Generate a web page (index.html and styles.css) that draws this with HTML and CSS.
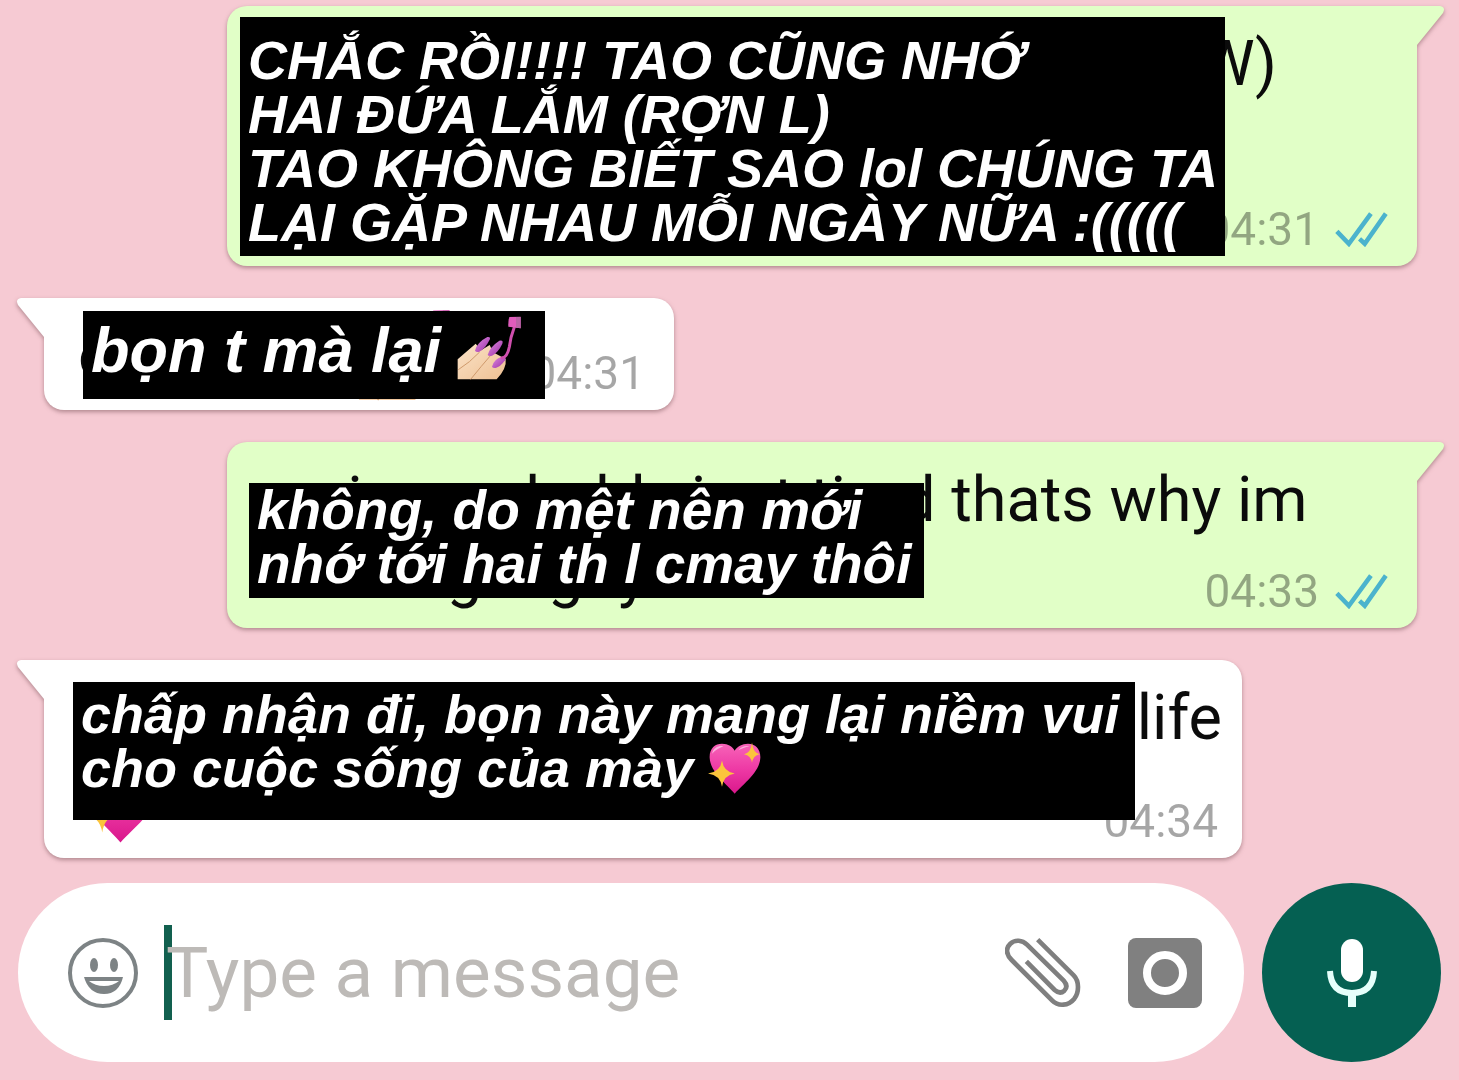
FILE: index.html
```html
<!DOCTYPE html>
<html lang="vi">
<head>
    <meta charset="UTF-8">
    <meta name="viewport" content="width=device-width, initial-scale=1.0">
    <title>Chat</title>
    <link rel="stylesheet" href="styles.css">
</head>
<body>
    <!-- shared icons -->
    <svg class="defs" aria-hidden="true">
        <defs>
            <linearGradient id="pink" x1="0" y1="0" x2="0" y2="1">
                <stop offset="0" stop-color="#f763b8"/>
                <stop offset="0.5" stop-color="#ee3aa5"/>
                <stop offset="1" stop-color="#d9178b"/>
            </linearGradient>
            <linearGradient id="skin" x1="0" y1="0" x2="1" y2="1">
                <stop offset="0" stop-color="#fbe3c8"/>
                <stop offset="1" stop-color="#eec093"/>
            </linearGradient>
            <linearGradient id="polish" x1="0" y1="0" x2="1" y2="1">
                <stop offset="0" stop-color="#dd8be0"/>
                <stop offset="1" stop-color="#9c2fa6"/>
            </linearGradient>
        </defs>
        <symbol id="heart" viewBox="54 33 162 158">
            <path d="M134 188C110 158 61 124 59 80C58 52 75 38 96 38C115 38 128 47 134 59C141 47 156 38 174 38C196 38 212 54 211 80C209 124 160 158 134 188Z" fill="url(#pink)"/>
            <path d="M66 68C70 50 84 43 100 45C90 49 77 55 66 68Z" fill="#fbb0dc"/>
            <path d="M145 57C154 46 165 43 178 45C165 48 156 52 145 57Z" fill="#fbb0dc"/>
            <path d="M96 88Q101 122 134 127Q101 132 96 167Q91 132 54 127Q91 122 96 88Z" fill="#fbc43c"/>
            <path d="M186 34Q189 65 209 69Q189 73 186 95Q183 73 162 69Q183 65 186 34Z" fill="#fbc43c"/>
        </symbol>
        <symbol id="nails" viewBox="36 31 192 192">
            <path d="M38 161L92 114L108 134L134 118L144 140L182 160Q186 188 155 221H38Z" fill="url(#skin)"/>
            <path d="M40 192Q75 170 104 139M77 221Q110 180 138 148" fill="none" stroke="#cf9a6c" stroke-width="3"/>
            <path d="M90 135Q96 110 127 94Q138 92 134 102Q120 130 103 138Q94 141 90 135Z" fill="url(#polish)"/>
            <path d="M128 148Q134 124 163 105Q176 102 172 114Q160 140 141 150Q132 153 128 148Z" fill="url(#polish)"/>
            <path d="M141 183Q146 160 171 153Q186 153 180 164Q166 184 152 187Q143 188 141 183Z" fill="url(#polish)"/>
            <path d="M171 157Q187 154 193 124Q196 96 208 64" fill="none" stroke="#d04fae" stroke-width="9" stroke-linecap="round"/>
            <path d="M193 34L227 33V68L190 63Q189 45 193 34Z" fill="#e05cbc"/>
            <path d="M213 34H227V68L213 66Z" fill="#b964a6"/>
        </symbol>
        <symbol id="ticks" viewBox="704 630 162 108">
            <path d="M709 690L746 728L814 635M779 713L795 728L860 635" fill="none" stroke="#4bb3cd" stroke-width="14"/>
        </symbol>
    </svg>

    <main class="chat">
        <div class="bubble sent">
            <div class="text">
                <p class="shout">(EW)</p>
                <p>&nbsp;</p>
                <p>&nbsp;</p>
            </div>
            <div class="meta"><time>04:31</time><svg class="ticks"><use href="#ticks"/></svg></div>
            <div class="caption first">
                <p>CHẮC RỒI!!!! TAO CŨNG NHỚ</p>
                <p>HAI ĐỨA LẮM (RỢN L)</p>
                <p>TAO KHÔNG BIẾT SAO lol CHÚNG TA</p>
                <p>LẠI GẶP NHAU MỖI NGÀY NỮA :(((((</p>
            </div>
        </div>

        <div class="bubble received short">
            <div class="text">
                <p>of course <svg class="emoji"><use href="#nails"/></svg></p>
            </div>
            <div class="meta"><time>04:31</time></div>
            <div class="caption second">
                <p>bọn t mà lại</p>
                <svg class="nails"><use href="#nails"/></svg>
            </div>
        </div>

        <div class="bubble sent">
            <div class="text">
                <p>no im probably just tired thats why im</p>
                <p>missing u guys</p>
            </div>
            <div class="meta"><time>04:33</time><svg class="ticks"><use href="#ticks"/></svg></div>
            <div class="caption third">
                <p>không, do mệt nên mới</p>
                <p>nhớ tới hai th l cmay thôi</p>
            </div>
        </div>

        <div class="bubble received long">
            <div class="text">
                <p class="end">life</p>
                <svg class="love"><use href="#heart"/></svg>
            </div>
            <div class="meta"><time>04:34</time></div>
            <div class="caption fourth">
                <p>chấp nhận đi, bọn này mang lại niềm vui</p>
                <p>cho cuộc sống của mày <svg class="heart"><use href="#heart"/></svg></p>
            </div>
        </div>
    </main>

    <form class="composer">
        <div class="field">
            <button type="button" class="icon" aria-label="Emoji">
                <svg class="smile" viewBox="0 0 72 72">
                    <circle cx="36" cy="36" r="33" fill="none" stroke="#7d8385" stroke-width="4"/>
                    <ellipse cx="27" cy="28" rx="4" ry="7" fill="#7d8385"/>
                    <ellipse cx="47" cy="28" rx="4" ry="7" fill="#7d8385"/>
                    <path d="M17 40H56Q52 57 37 57T17 40Z" fill="#7d8385"/>
                    <path d="M22 44H52Q46 49 37 49T22 44Z" fill="#fff"/>
                </svg>
            </button>
            <span class="cursor"></span>
            <input type="text" placeholder="Type a message" aria-label="Type a message">
            <button type="button" class="icon" aria-label="Attach">
                <svg class="clip" viewBox="76 206 228 210">
                    <path d="M174 211L282 318C300 336 298 370 284 388C266 410 236 412 218 394L96 272C78 254 78 236 92 223C106 210 128 212 142 226L252 334C262 345 262 356 254 364C245 372 234 370 225 362L140 276" fill="none" stroke="#7f7f7f" stroke-width="14"/>
                </svg>
            </button>
            <button type="button" class="icon camera" aria-label="Camera">
                <svg class="cam" viewBox="0 0 74 70">
                    <rect width="74" height="70" rx="8" fill="#808080"/>
                    <circle cx="37" cy="35" r="18" fill="none" stroke="#fff" stroke-width="8"/>
                </svg>
            </button>
        </div>
        <button type="button" class="mic" aria-label="Record">
            <svg viewBox="0 0 50 68">
                <rect x="14" y="0" width="22" height="43" rx="11" fill="#fff"/>
                <path d="M3 32Q4 54 25 54T47 32" fill="none" stroke="#e6fffb" stroke-width="6"/>
                <path d="M25 54V68" stroke="#e6fffb" stroke-width="8"/>
            </svg>
        </button>
    </form>
</body>
</html>
```
FILE: styles.css
```css
*{
    margin: 0px;
    padding: 0px;
    box-sizing: border-box;
}

body{
    background-color: #f6cad3;
    font-family: Roboto, sans-serif;
    min-height: 100vh;
}

.defs{
    position: absolute;
    width: 0px;
    height: 0px;
}

.chat{
    display: flex;
    flex-direction: column;
    gap: 32px;
    padding: 6px 42px 25px 44px;
}

.bubble{
    position: relative;
    border-radius: 20px;
    padding: 21px 20px 17px 34px;
    font-size: 63px;
    line-height: 74px;
    color: #0b0b0b;
    filter: drop-shadow(0px 2px 2px rgba(110, 70, 75, 0.5));
}

.bubble::after{
    content: "";
    position: absolute;
    top: 0px;
    width: 28px;
    height: 40px;
}

.sent{
    background-color: #e1ffc7;
    margin-left: 183px;
    border-top-right-radius: 0px;
}

.sent::after{
    left: 100%;
    background-color: #e1ffc7;
    clip-path: path("M0 0H23Q29 1 26 7L0 39Z");
}

.received{
    background-color: #fff;
    border-top-left-radius: 0px;
}

.received::after{
    right: 100%;
    background-color: #fff;
    clip-path: path("M28 0H5Q-1 1 2 7L28 39Z");
}

.short{
    align-self: flex-start;
    padding-right: 224px;
}

.long{
    margin-right: 175px;
}

.shout{
    text-align: right;
    padding-right: 120px;
}

.end{
    text-align: right;
}

.text p{
    white-space: nowrap;
}

.emoji{
    width: 92px;
    height: 92px;
    margin: -30px 0px -24px;
}

.love{
    display: block;
    width: 78px;
    height: 78px;
    margin: 12px 4px -4px;
}

.meta{
    position: absolute;
    right: 29px;
    bottom: 10px;
    display: flex;
    align-items: center;
    gap: 16px;
    font-size: 46px;
    line-height: 54px;
    color: rgba(0, 0, 0, 0.35);
}

.long .meta{
    right: 24px;
}

.ticks{
    width: 53px;
    height: 35px;
}

/* black labels that lie over the bubbles */
.caption{
    position: absolute;
    background-color: #000;
    color: #fff;
    font-family: "Liberation Sans", Arial, sans-serif;
    font-weight: bold;
    font-style: italic;
    font-size: 54px;
    line-height: 54px;
    white-space: nowrap;
}

.first{
    left: 13px;
    top: 11px;
    width: 985px;
    padding: 16px 8px 7px;
}

.second{
    left: 39px;
    top: 13px;
    width: 462px;
    height: 88px;
    padding: 5px 8px;
    display: flex;
    gap: 16px;
    font-size: 63px;
    line-height: 68px;
}

.nails{
    width: 64px;
    height: 64px;
}

.third{
    left: 22px;
    top: 41px;
    width: 675px;
    padding: 0px 8px 7px;
    font-size: 55px;
}

.fourth{
    left: 29px;
    top: 22px;
    width: 1062px;
    height: 138px;
    padding: 5px 8px;
}

.heart{
    width: 54px;
    height: 53px;
    vertical-align: -8px;
}

.composer{
    display: flex;
    gap: 18px;
    padding: 0px 18px 18px;
}

.field{
    flex: 1;
    min-width: 0px;
    display: flex;
    align-items: center;
    background-color: #fff;
    border-radius: 90px;
    padding: 0px 42px 0px 49px;
}

.field input{
    flex: 1;
    min-width: 0px;
    border: none;
    outline: none;
    background: none;
    font-family: Roboto, sans-serif;
    font-size: 71px;
    color: #222;
}

.field input::placeholder{
    color: #bdbab7;
    opacity: 1;
}

.cursor{
    width: 8px;
    height: 95px;
    margin-left: 25px;
    margin-right: -6px;
    background-color: #12604f;
}

.icon{
    border: none;
    background: none;
}

.icon svg{
    display: block;
}

.smile{
    width: 72px;
    height: 72px;
}

.clip{
    width: 76px;
    height: 70px;
}

.camera{
    margin-left: 47px;
}

.cam{
    width: 74px;
    height: 70px;
}

.mic{
    width: 179px;
    height: 179px;
    border: none;
    border-radius: 50%;
    background-color: #056052;
    display: flex;
    align-items: center;
    justify-content: center;
}

.mic svg{
    width: 50px;
    height: 68px;
}
```
